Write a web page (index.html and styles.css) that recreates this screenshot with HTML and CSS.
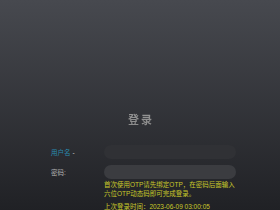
FILE: index.html
```html
<!doctype html>
<html>
	<head>
		<meta charset="utf-8"/>
		<title>登录</title>
		<link rel="stylesheet" href="styles.css">
	</head>
	<body>
		<h1 class="title">登录</h1>
		<form class="login">
			<div class="row">
				<label class="lbl link">用户名<span class="caret">-</span></label>
				<input class="box" type="text">
			</div>
			<div class="row">
				<label class="lbl">密码:</label>
				<input class="box box-pw" type="password">
			</div>
			<div class="row">
				<div class="lbl"></div>
				<div class="tips">
					<p class="tip">首次使用OTP请先绑定OTP，在密码后面输入六位OTP动态码即可完成登录。</p>
					<p class="tip">上次登录时间：2023-06-09 03:00:05</p>
				</div>
			</div>
		</form>
	</body>
</html>
```

FILE: styles.css
```css
html, body {
	height: 100%;
}
body {
	margin: 0;
	background: linear-gradient(#47494f, #202125);
	font-family: "Liberation Sans", "Noto Sans CJK SC", sans-serif;
	overflow: hidden;
}

.title {
	margin: 0;
	padding-top: 114px;
	height: 12px;
	line-height: 12px;
	font-size: 11px;
	font-weight: bold;
	letter-spacing: 2px;
	text-indent: 2px;
	text-align: center;
	color: #c8c8c8;
	background: linear-gradient(#f4f4f4, #8a8a8a);
	-webkit-background-clip: text;
	background-clip: text;
	-webkit-text-fill-color: transparent;
}

.login {
	margin: 19px 0 0 51px;
	width: 185px;
}

.row {
	display: flex;
	align-items: center;
	margin-bottom: 6px;
}
.row:last-child {
	align-items: flex-start;
	margin-top: -5px;
}

.lbl {
	width: 53px;
	flex: none;
	font-size: 6.5px;
	color: #b4b4b4;
}
.link {
	color: #2a8cb0;
}
.caret {
	margin-left: 2px;
	color: #c8c8c8;
}

.box {
	display: block;
	width: 132px;
	height: 14px;
	padding: 0 6px;
	box-sizing: border-box;
	border: none;
	border-radius: 7px;
	background-color: #303135;
	outline: none;
}
.box-pw {
	background-color: #3b3c40;
}

.tips {
	width: 132px;
}
.tip {
	margin: 0 0 4px 0;
	font-size: 6.5px;
	line-height: 9px;
	color: #c9c92a;
}
```
